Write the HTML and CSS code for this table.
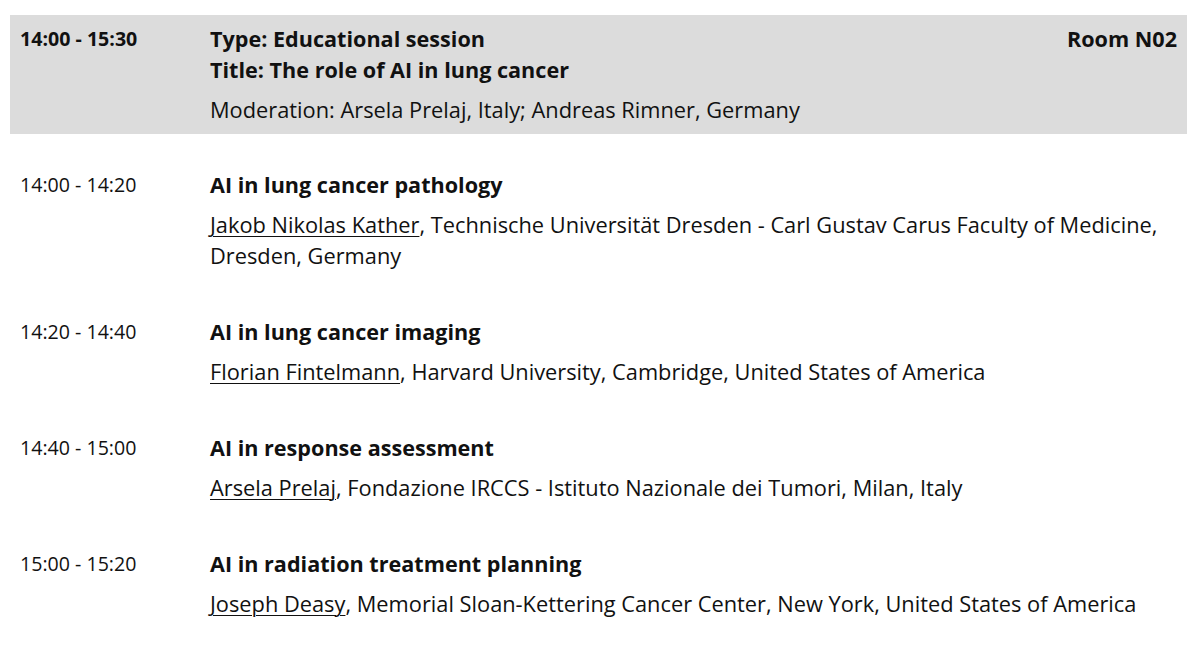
FILE: index.html
```html
<!DOCTYPE html>
<html>
<head>
<meta charset="utf-8">
<link rel="stylesheet" href="styles.css">
</head>
<body>
<div class="page">
  <div class="session">
    <div class="time">14:00 - 15:30</div>
    <div class="info">
      <div class="head-row">
        <div class="head-titles">
          <div class="bold-line">Type: Educational session</div>
          <div class="bold-line">Title: The role of AI in lung cancer</div>
        </div>
        <div class="room">Room N02</div>
      </div>
      <div class="moderation">Moderation: Arsela Prelaj, Italy; Andreas Rimner, Germany</div>
    </div>
  </div>

  <div class="talks">
    <div class="talk">
      <div class="time reg">14:00 - 14:20</div>
      <div class="info">
        <div class="talk-title">AI in lung cancer pathology</div>
        <div class="speaker"><span class="name">Jakob Nikolas Kather</span>, Technische Universität Dresden - Carl Gustav Carus Faculty of Medicine, Dresden, Germany</div>
      </div>
    </div>
    <div class="talk">
      <div class="time reg">14:20 - 14:40</div>
      <div class="info">
        <div class="talk-title">AI in lung cancer imaging</div>
        <div class="speaker"><span class="name">Florian Fintelmann</span>, Harvard University, Cambridge, United States of America</div>
      </div>
    </div>
    <div class="talk">
      <div class="time reg">14:40 - 15:00</div>
      <div class="info">
        <div class="talk-title">AI in response assessment</div>
        <div class="speaker"><span class="name">Arsela Prelaj</span>, Fondazione IRCCS - Istituto Nazionale dei Tumori, Milan, Italy</div>
      </div>
    </div>
    <div class="talk">
      <div class="time reg">15:00 - 15:20</div>
      <div class="info">
        <div class="talk-title">AI in radiation treatment planning</div>
        <div class="speaker"><span class="name">Joseph Deasy</span>, Memorial Sloan-Kettering Cancer Center, New York, United States of America</div>
      </div>
    </div>
  </div>
</div>
</body>
</html>
```

FILE: styles.css
```css
html, body {
  margin: 0;
  padding: 0;
  background: #ffffff;
}
body {
  font-family: "Open Sans", "Noto Sans", sans-serif;
  color: #111111;
}
.page {
  padding: 15px 12px 0 10px;
}
.session {
  display: flex;
  background: #dcdcdc;
  padding: 8px 10px 9px 10px;
}
.time {
  width: 190px;
  flex: none;
  font-size: 19.6px;
  font-weight: 700;
  line-height: 31px;
}
.time.reg {
  font-weight: 400;
}
.info {
  flex: 1;
}
.head-row {
  display: flex;
  justify-content: space-between;
}
.bold-line, .room {
  font-size: 21.6px;
  font-weight: 700;
  line-height: 31px;
}
.moderation {
  font-size: 21.8px;
  line-height: 31px;
  margin-top: 9px;
}
.talks {
  padding: 35px 10px 0 10px;
}
.talk {
  display: flex;
  padding-bottom: 45px;
}
.talk-title {
  font-size: 21.6px;
  font-weight: 700;
  line-height: 31px;
}
.speaker {
  font-size: 21.8px;
  line-height: 31px;
  margin-top: 9px;
}
.name {
  text-decoration: underline;
  text-underline-offset: 3px;
  text-decoration-thickness: 1px;
}
```
